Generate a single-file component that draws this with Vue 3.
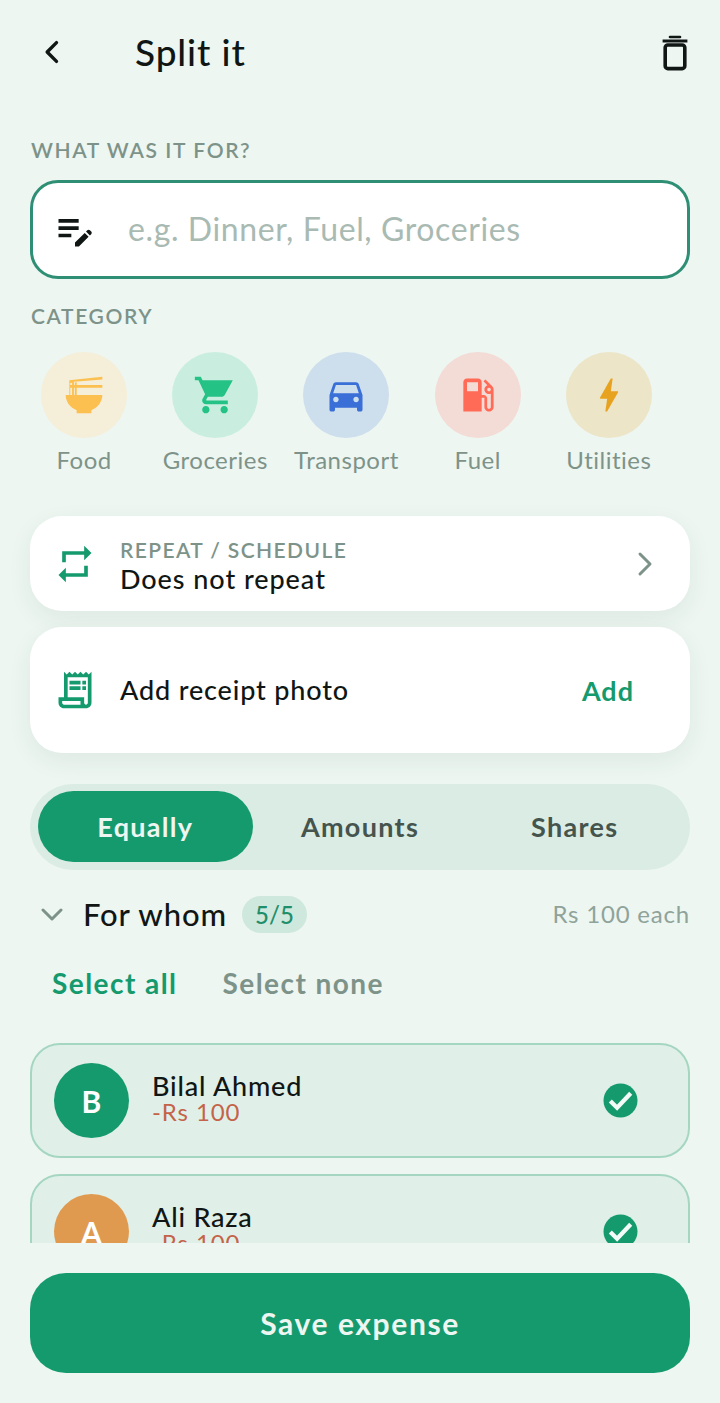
<template>
  <div class="screen">
    <div class="scroll">
      <header class="top">
        <svg class="back" viewBox="0 0 24 24" fill="none" stroke="currentColor" stroke-width="2.9" stroke-linecap="round" stroke-linejoin="round">
          <path d="M15 4 7 12l8 8"></path>
        </svg>
        <h1 class="title">Split it</h1>
        <svg class="trash" viewBox="0 0 26 36" fill="none" stroke="currentColor" stroke-width="3.6" stroke-linejoin="round">
          <rect x="3.2" y="10" width="19.6" height="23.6" rx="2.6"></rect>
          <path d="M0.6 6h24.8" stroke-width="3"></path>
          <path d="M8 2h10" stroke-width="2.6" stroke-linecap="round"></path>
        </svg>
      </header>

      <div class="label what">WHAT WAS IT FOR?</div>
      <div class="field">
        <svg class="icon44 note" viewBox="0 0 24 24" fill="currentColor">
          <path d="M3 10h11v2H3zm0-2h11V6H3zm0 8h7v-2H3zm15.01-3.13.71-.71c.39-.39 1.02-.39 1.41 0l.71.71c.39.39.39 1.02 0 1.41l-.71.71-2.12-2.12zm-.71.71-5.3 5.3V21h2.12l5.3-5.3-2.12-2.12z"></path>
        </svg>
        <span class="placeholder">e.g. Dinner, Fuel, Groceries</span>
      </div>

      <div class="label cat">CATEGORY</div>
      <div class="cats">
        <div v-for="c in categories" :key="c.name" class="cat-item">
          <div class="cat-circle" :style="{ background: c.bg, color: c.fg }">
            <svg class="icon44" viewBox="0 0 24 24" fill="currentColor"><path :d="c.icon"></path></svg>
          </div>
          <span class="cat-name">{{ c.name }}</span>
        </div>
      </div>

      <div class="card repeat">
        <svg class="icon44 green" viewBox="0 0 24 24" fill="currentColor">
          <path d="M7 7h10v3l4-4-4-4v3H5v6h2V7zm10 10H7v-3l-4 4 4 4v-3h12v-6h-2v4z"></path>
        </svg>
        <div class="repeat-text">
          <div class="repeat-label">REPEAT / SCHEDULE</div>
          <div class="card-main">Does not repeat</div>
        </div>
        <svg class="chev" viewBox="0 0 18 26" fill="none" stroke="currentColor" stroke-width="3" stroke-linecap="round" stroke-linejoin="round">
          <path d="m4 3 10 10L4 23"></path>
        </svg>
      </div>

      <div class="card receipt">
        <svg class="icon44 green" viewBox="0 0 24 24" fill="currentColor">
          <path d="M19.5 3.5 18 2l-1.5 1.5L15 2l-1.5 1.5L12 2l-1.5 1.5L9 2 7.5 3.5 6 2v14H3v3c0 1.66 1.34 3 3 3h12c1.66 0 3-1.34 3-3V2l-1.5 1.5zM15 20H6c-.55 0-1-.45-1-1v-1h10v2zm4-1c0 .55-.45 1-1 1s-1-.45-1-1v-3H8V5h11v14z"></path>
          <path d="M9 7h6v2H9zm7 0h2v2h-2zm-7 3h6v2H9zm7 0h2v2h-2z"></path>
        </svg>
        <div class="card-main grow">Add receipt photo</div>
        <span class="add">Add</span>
      </div>

      <div class="segment">
        <div v-for="(s, i) in modes" :key="s" class="seg" :class="{ active: i === 0 }">{{ s }}</div>
      </div>

      <div class="whom">
        <svg class="whom-chev" viewBox="0 0 24 14" fill="none" stroke="currentColor" stroke-width="3" stroke-linecap="round" stroke-linejoin="round">
          <path d="m3 3 9 9 9-9"></path>
        </svg>
        <span class="whom-title">For whom</span>
        <span class="pill">5/5</span>
        <span class="each">Rs 100 each</span>
      </div>

      <div class="select-row">
        <span class="sel-all">Select all</span>
        <span class="sel-none">Select none</span>
      </div>

      <div class="people">
        <div v-for="p in people" :key="p.name" class="person">
          <div class="avatar" :style="{ background: p.color }">{{ p.name[0] }}</div>
          <div class="person-text">
            <div class="person-name">{{ p.name }}</div>
            <div class="person-amt">-Rs 100</div>
          </div>
          <svg class="check" viewBox="0 0 36 36">
            <circle cx="18" cy="18" r="17.5" fill="#159a6e"></circle>
            <path d="m7.5 18.5 7 7 14-15" fill="none" stroke="#f2fbf7" stroke-width="4.4"></path>
          </svg>
        </div>
      </div>
    </div>

    <footer class="foot">
      <div class="save">Save expense</div>
    </footer>
  </div>
</template>

<script setup>
const categories = [
  {
    name: 'Food',
    bg: '#f5eed8',
    fg: '#fbc04f',
    icon: 'M22,3.51V2L4,3.99V12H2c0,3.69,2.47,6.86,6,8.25V22h8v-1.75c3.53-1.39,6-4.56,6-8.25H6.5V8H22V6.5H6.5V4.78L22,3.51z M8,5.06V6.5H7V5.17L8,5.06z M7,8h1v4H7V8z M4.5,5.42l1-0.11V6.5h-1V5.42z M4.5,8h1v4h-1V8z'
  },
  {
    name: 'Groceries',
    bg: '#c9eee0',
    fg: '#25c285',
    icon: 'M7 18c-1.1 0-1.99.9-1.99 2S5.9 22 7 22s2-.9 2-2-.9-2-2-2zM1 2v2h2l3.6 7.59-1.35 2.45c-.16.28-.25.61-.25.96 0 1.1.9 2 2 2h12v-2H7.42c-.14 0-.25-.11-.25-.25l.03-.12.9-1.63h7.45c.75 0 1.41-.41 1.75-1.03L21.7 4H5.21l-.94-2H1zm16 16c-1.1 0-1.99.9-1.99 2s.89 2 1.99 2 2-.9 2-2-.9-2-2-2z'
  },
  {
    name: 'Transport',
    bg: '#cddfed',
    fg: '#3a6fd8',
    icon: 'M18.92 6.01C18.72 5.42 18.16 5 17.5 5h-11c-.66 0-1.21.42-1.42 1.01L3 12v8c0 .55.45 1 1 1h1c.55 0 1-.45 1-1v-1h12v1c0 .55.45 1 1 1h1c.55 0 1-.45 1-1v-8l-2.08-5.99zM6.5 16c-.83 0-1.5-.67-1.5-1.5S5.67 13 6.5 13s1.5.67 1.5 1.5S7.33 16 6.5 16zm11 0c-.83 0-1.5-.67-1.5-1.5s.67-1.5 1.5-1.5 1.5.67 1.5 1.5-.67 1.5-1.5 1.5zM5 11l1.5-4.5h11L19 11H5z'
  },
  {
    name: 'Fuel',
    bg: '#f3dbd6',
    fg: '#ff6b57',
    icon: 'M19.77 7.23l.01-.01-3.72-3.72L15 4.56l2.11 2.11c-.94.36-1.61 1.26-1.61 2.33 0 1.38 1.12 2.5 2.5 2.5.36 0 .69-.08 1-.21v7.21c0 .55-.45 1-1 1s-1-.45-1-1V14c0-1.1-.9-2-2-2h-1V5c0-1.1-.9-2-2-2H6c-1.1 0-2 .9-2 2v16h10v-7.5h1.5v5c0 1.38 1.12 2.5 2.5 2.5s2.5-1.12 2.5-2.5V9c0-.69-.28-1.32-.73-1.77zM12 10H6V5h6v5zm6 0c-.55 0-1-.45-1-1s.45-1 1-1 1 .45 1 1-.45 1-1 1z'
  },
  {
    name: 'Utilities',
    bg: '#ece5c8',
    fg: '#e7a320',
    icon: 'M11 21h-1l1-7H7.5c-.58 0-.57-.32-.38-.66.19-.34.05-.08.07-.12C8.48 10.94 10.42 7.54 13 3h1l-1 7h3.5c.49 0 .56.33.47.51l-.07.15C12.96 17.55 11 21 11 21z'
  }
]

const modes = ['Equally', 'Amounts', 'Shares']

const people = [
  { name: 'Bilal Ahmed', color: '#159a6e' },
  { name: 'Ali Raza', color: '#e09a50' }
]
</script>

<style>
html, body {
  margin: 0;
  background: #edf6f1;
}
</style>

<style scoped>
.screen {
  width: 720px;
  height: 1403px;
  background: #edf6f1;
  font-family: Lato, "Noto Sans", sans-serif;
  color: #101614;
  overflow: hidden;
  display: flex;
  flex-direction: column;
}

.scroll {
  height: 1243px;
  overflow: hidden;
  padding: 0 30px;
  box-sizing: border-box;
}

.top {
  height: 106px;
  display: flex;
  align-items: center;
}

.back {
  width: 28px;
  height: 28px;
  margin-left: 9px;
  margin-bottom: 2px;
  color: #101614;
}

.title {
  margin: 0 0 4px 68px;
  font-size: 37px;
  font-weight: 500;
  letter-spacing: 0.9px;
  flex: 1;
}

.trash {
  width: 26px;
  height: 36px;
  margin-right: 2px;
}

.label {
  font-size: 21px;
  font-weight: 600;
  color: #7d9389;
  letter-spacing: 1.6px;
  line-height: 26px;
  padding-left: 1px;
}

.what {
  margin-top: 31px;
}

.field {
  margin-top: 17px;
  height: 99px;
  box-sizing: border-box;
  border: 3px solid #2f8f75;
  border-radius: 28px;
  background: #fff;
  display: flex;
  align-items: center;
  padding-left: 20px;
}

.note {
  color: #101614;
}

.placeholder {
  margin-left: 31px;
  margin-bottom: 2px;
  font-size: 32px;
  color: #a9bab3;
  letter-spacing: 0.6px;
}

.cat {
  margin-top: 24px;
}

.cats {
  margin: 23px -11.5px 0;
  display: grid;
  grid-template-columns: repeat(5, 131.2px);
}

.cat-item {
  display: flex;
  flex-direction: column;
  align-items: center;
}

.cat-circle {
  width: 86px;
  height: 86px;
  border-radius: 50%;
  display: flex;
  align-items: center;
  justify-content: center;
}

.cat-name {
  margin-top: 7px;
  font-size: 24px;
  line-height: 30px;
  color: #7d9389;
  letter-spacing: 0.5px;
}

.icon44 {
  width: 44px;
  height: 44px;
  flex: none;
}

.green {
  color: #159a6e;
}

.card {
  background: #fff;
  border-radius: 32px;
  box-shadow: 0 8px 24px rgba(40, 70, 60, 0.07);
  display: flex;
  align-items: center;
  padding-left: 23px;
  padding-right: 34px;
}

.repeat {
  margin-top: 41px;
  height: 95px;
}

.repeat-text {
  margin-left: 23px;
  padding-top: 4px;
  flex: 1;
}

.repeat-label {
  font-size: 21px;
  line-height: 26px;
  font-weight: 600;
  color: #7d9389;
  letter-spacing: 1.4px;
}

.card-main {
  font-size: 27px;
  line-height: 32px;
  font-weight: 500;
  letter-spacing: 0.95px;
}

.chev {
  width: 18px;
  height: 26px;
  color: #7d9389;
  margin-right: 2px;
}

.receipt {
  margin-top: 16px;
  height: 126px;
}

.grow {
  flex: 1;
  margin-left: 23px;
  letter-spacing: 0.85px;
}

.add {
  font-size: 27px;
  font-weight: 700;
  letter-spacing: 1px;
  color: #159a6e;
  margin-right: 22px;
}

.segment {
  margin-top: 31px;
  height: 86px;
  border-radius: 43px;
  background: #daece3;
  padding: 7px 8px 8px;
  box-sizing: border-box;
  display: grid;
  grid-template-columns: repeat(3, 1fr);
}

.seg {
  display: flex;
  align-items: center;
  justify-content: center;
  font-size: 27px;
  font-weight: 700;
  letter-spacing: 1.3px;
  color: #46544e;
  border-radius: 36px;
}

.seg.active {
  background: #159a6e;
  color: #edf6f1;
}

.whom {
  margin-top: 23px;
  height: 42px;
  display: flex;
  align-items: center;
}

.whom-chev {
  width: 24px;
  height: 14px;
  margin-left: 10px;
  color: #7d9389;
}

.whom-title {
  margin-left: 19px;
  font-size: 31px;
  font-weight: 500;
  letter-spacing: 0.9px;
}

.pill {
  margin-left: 15px;
  height: 37px;
  width: 65px;
  border-radius: 19px;
  background: #cfe8dd;
  color: #1f8f6b;
  font-size: 24px;
  font-weight: 500;
  display: flex;
  align-items: center;
  justify-content: center;
}

.each {
  margin-left: auto;
  margin-bottom: 2px;
  font-size: 24px;
  color: #8fa39a;
  letter-spacing: 0.8px;
}

.select-row {
  margin-top: 27px;
  height: 42px;
  display: flex;
  align-items: center;
  padding-left: 22px;
  gap: 45px;
  font-size: 28px;
  font-weight: 700;
  letter-spacing: 1.45px;
}

.sel-all {
  color: #159a6e;
}

.sel-none {
  color: #7d9389;
}

.people {
  margin-top: 39px;
  display: flex;
  flex-direction: column;
  gap: 16px;
}

.person {
  height: 115px;
  flex: none;
  box-sizing: border-box;
  background: #e0f0e8;
  border: 2px solid #a5d6c2;
  border-radius: 30px;
  display: flex;
  align-items: center;
  padding-left: 22px;
  padding-right: 50px;
}

.avatar {
  width: 75px;
  height: 75px;
  flex: none;
  border-radius: 50%;
  color: #fff;
  font-size: 30px;
  font-weight: 700;
  display: flex;
  align-items: center;
  justify-content: center;
}

.person-text {
  margin-left: 23px;
  margin-bottom: 4px;
  flex: 1;
}

.person-name {
  font-size: 27px;
  line-height: 28px;
  font-weight: 500;
  letter-spacing: 0.8px;
}

.person-amt {
  margin-top: -1px;
  font-size: 24px;
  line-height: 26px;
  color: #c4634a;
  letter-spacing: 0.9px;
}

.check {
  width: 35px;
  height: 35px;
  flex: none;
}

.foot {
  flex: 1;
  padding: 30px 30px 0;
}

.save {
  height: 100px;
  border-radius: 36px;
  background: #159a6e;
  color: #edf6f1;
  display: flex;
  align-items: center;
  justify-content: center;
  font-size: 30px;
  font-weight: 700;
  letter-spacing: 1.6px;
}
</style>
